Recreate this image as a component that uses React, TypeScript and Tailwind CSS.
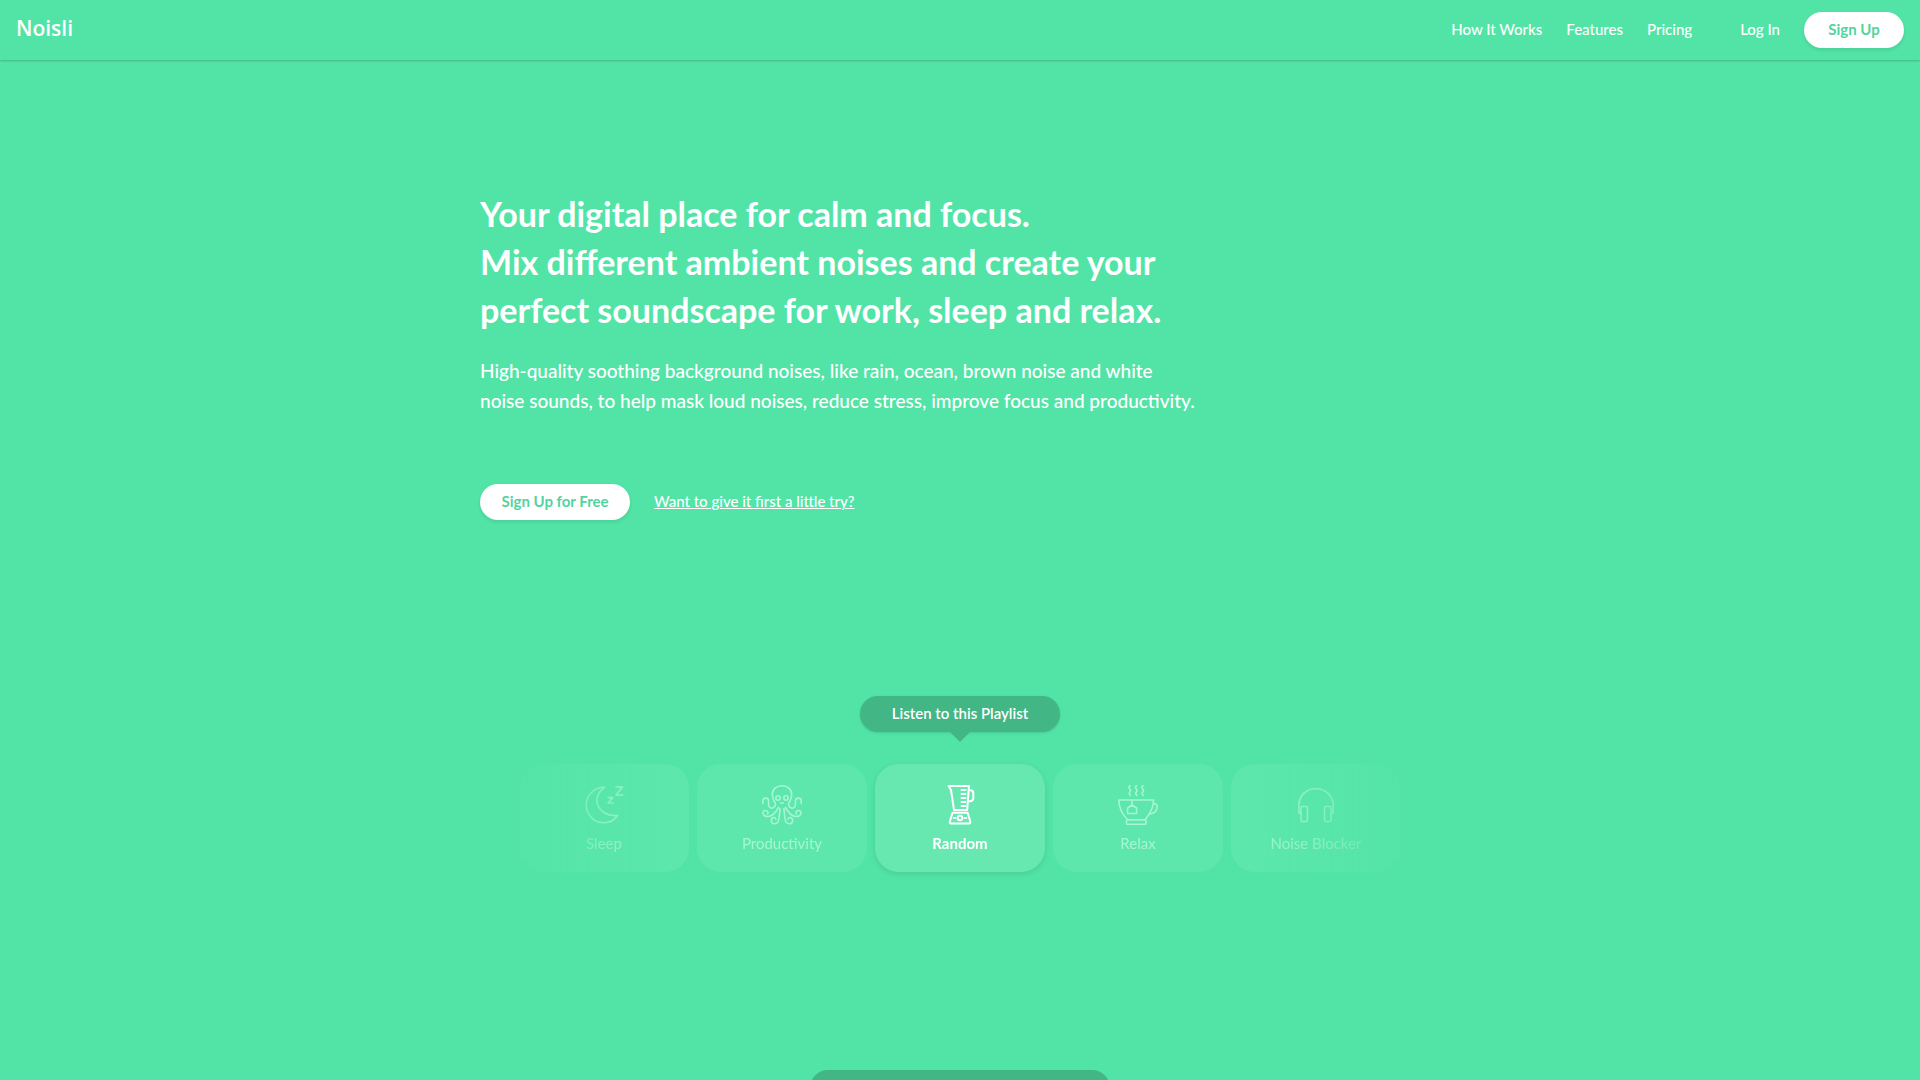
import type { ReactNode } from 'react'
import clsx from 'clsx'

const navLinks = ['How It Works', 'Features', 'Pricing']

function MoonIcon() {
  return (
    <>
      <path d="M20.5 2.3C10.5 2.3 2.3 10 2.3 20S10 37.7 19.8 37.7c6.2 0 11-3 13.7-7.2C22 31.5 13 24.5 13 15.5c0-5.5 3-10 7.5-13.2z" />
      <path d="M32 2h6.5L32 10h6.7" />
      <path d="M24 12.600h4.700L24 18h5" />
    </>
  )
}

function OctopusIcon() {
  const tentacles = (
    <>
      <path d="M.8 18.5V16a2.9 2.9 0 0 1 5.800 0v3.500c0 3.800 3 4.200 5 3 2.200-1.300 2.500-4 .7-6" />
      <path d="M16.500 22.500C14 27 10.500 31.500 6 31.500c-6 0-6.300-6-2.500-6 2.500 0 3 2.500 2 3.500" />
      <path d="M18 23.500c0 4-.7 7.500-1.200 11-.7 5.500-7.500 5.500-7.500 1 0-3.500 4-3.800 4.700-1.200" />
    </>
  )
  return (
    <>
      <path d="M12.3 16.5C11 14 10.3 12 10.3 9.5 10.3 4.3 14.6.8 20 .8s9.700 3.500 9.700 8.700c0 2.500-.7 4.500-2 7" />
      <circle cx="16" cy="13" r="2.2" />
      <circle cx="24" cy="13" r="2.2" />
      <path d="M18.500 18h3" />
      {tentacles}
      <g transform="translate(40 0) scale(-1 1)">{tentacles}</g>
    </>
  )
}

function BlenderIcon() {
  return (
    <>
      <path d="M8.5 1H29l-1.800 24H14L11 5z" />
      <path d="M28.700 5.200h1.600a3 3 0 0 1 3 3v5a3 3 0 0 1-3 3H28" />
      <path d="M21.5 5h4M21.5 9h4M21.5 13h4M21.5 17h4M21.5 21h4" />
      <path d="M12.500 27.700h15.200l2.600 9c.2 1-.2 1.800-1.300 1.800H11c-1 0-1.500-.8-1.200-1.800z" />
      <circle cx="20" cy="33" r="2.3" />
      <path d="M13.800 33h1.800M24.500 33h1.800" />
    </>
  )
}

function CupIcon() {
  return (
    <>
      <path d="M.8 15h34.800C35.600 24 31 30 27 34.700H9.500C5 30 .8 24 .8 15z" />
      <rect x="8.5" y="34.7" width="19.5" height="4.6" rx="1" />
      <path d="M35.500 18.500c5.500-.5 5 9.500-3.500 10.500" />
      <path d="M14 15v5l-4.400 3v5.500h9V23L14 20" />
      <path d="M12 .7c-3.500 3 2.500 3.500 0 6-.8.9-1 2.500.3 3.800M18.500.7c-3.500 3 2.500 3.500 0 6-.8.9-1 2.500.3 3.800M25 .7c-3.500 3 2.500 3.500 0 6-.8.9-1 2.500.3 3.800" />
    </>
  )
}

function HeadphonesIcon() {
  return (
    <>
      <path d="M5 28H2.800V20.500C2.800 10.500 10.500 3.800 20 3.800s17.200 6.700 17.200 16.700V28H35" />
      <rect x="5" y="21.5" width="6.5" height="15" rx="1.5" />
      <rect x="28.5" y="21.5" width="6.5" height="15" rx="1.5" />
    </>
  )
}

const playlists: { name: string; icon: ReactNode; active?: boolean }[] = [
  { name: 'Sleep', icon: <MoonIcon /> },
  { name: 'Productivity', icon: <OctopusIcon /> },
  { name: 'Random', icon: <BlenderIcon />, active: true },
  { name: 'Relax', icon: <CupIcon /> },
  { name: 'Noise Blocker', icon: <HeadphonesIcon /> },
]

export default function App() {
  return (
    <div className="h-screen overflow-hidden bg-[#52e4a6] text-white font-['Lato',sans-serif]">
      {/* Header */}
      <header className="h-[60px] flex items-center justify-between px-4 shadow-[0_1px_2px_rgba(0,0,0,0.2)]">
        <a href="#" className="pb-1 text-[21px] leading-7 font-semibold font-['Open_Sans',sans-serif]">Noisli</a>
        <nav className="flex items-center gap-6 text-[15px] leading-5 font-medium">
          {navLinks.map(l => (
            <a key={l} href="#" className="pb-0.5">{l}</a>
          ))}
          <a href="#" className="ml-6 pb-0.5">Log In</a>
          <button className="w-[100px] h-9 pb-0.5 rounded-full bg-white text-[#52d3a0] font-bold shadow-[0_2px_4px_rgba(0,0,0,0.1)]">
            Sign Up
          </button>
        </nav>
      </header>

      {/* Hero */}
      <main className="max-w-[960px] mx-auto pt-[130px]">
        <h1 className="text-[34px] leading-12 font-bold">
          Your digital place for calm and focus.<br />
          Mix different ambient noises and create your<br />
          perfect soundscape for work, sleep and relax.
        </h1>
        <p className="mt-[22px] text-[19px] leading-[30px] font-medium">
          High-quality soothing background noises, like rain, ocean, brown noise and white<br />
          noise sounds, to help mask loud noises, reduce stress, improve focus and productivity.
        </p>
        <div className="mt-17 flex items-center gap-6 text-[15px] leading-5">
          <button className="w-[150px] h-9 pb-0.5 rounded-full bg-white text-[#52d3a0] font-bold shadow-[0_2px_4px_rgba(0,0,0,0.1)]">
            Sign Up for Free
          </button>
          <a href="#" className="pb-0.5 underline font-medium">Want to give it first a little try?</a>
        </div>

        {/* Playlist picker */}
        <section className="mt-44 flex flex-col items-center">
          <button className="w-[200px] h-9 pb-0.5 rounded-full bg-[#42b685] text-[15px] leading-5 font-semibold shadow-[0_1px_3px_rgba(0,0,0,0.12)]">
            Listen to this Playlist
          </button>
          <svg width="20" height="10" viewBox="0 0 20 10" className="fill-[#42b685]">
            <path d="M0 0h20L10 10z" />
          </svg>
          <div className="w-full pt-[22px] pb-10 flex justify-center gap-2 mask-[linear-gradient(to_right,transparent,black_20%,black_80%,transparent)]">
            {playlists.map(p => (
              <button
                key={p.name}
                className={clsx(
                  'w-[170px] h-[108px] pt-[21px] rounded-[24px] flex flex-col items-center justify-start gap-2 text-[15px] leading-5',
                  p.active
                    ? 'bg-[#68e8b1] font-bold shadow-[0_2px_6px_rgba(0,0,0,0.1)]'
                    : 'bg-[#5de7ac] text-[#a6f6d3]'
                )}
              >
                <svg width="40" height="40" viewBox="0 0 40 40" fill="none" stroke="currentColor" strokeWidth={p.active ? 2 : 1.6} strokeLinecap="round" strokeLinejoin="round" aria-hidden="true">
                  {p.icon}
                </svg>
                {p.name}
              </button>
            ))}
          </div>
        </section>

        <div className="mt-[158px] mx-auto w-[300px] h-9 rounded-full bg-[#42b685]" />
      </main>
    </div>
  )
}
